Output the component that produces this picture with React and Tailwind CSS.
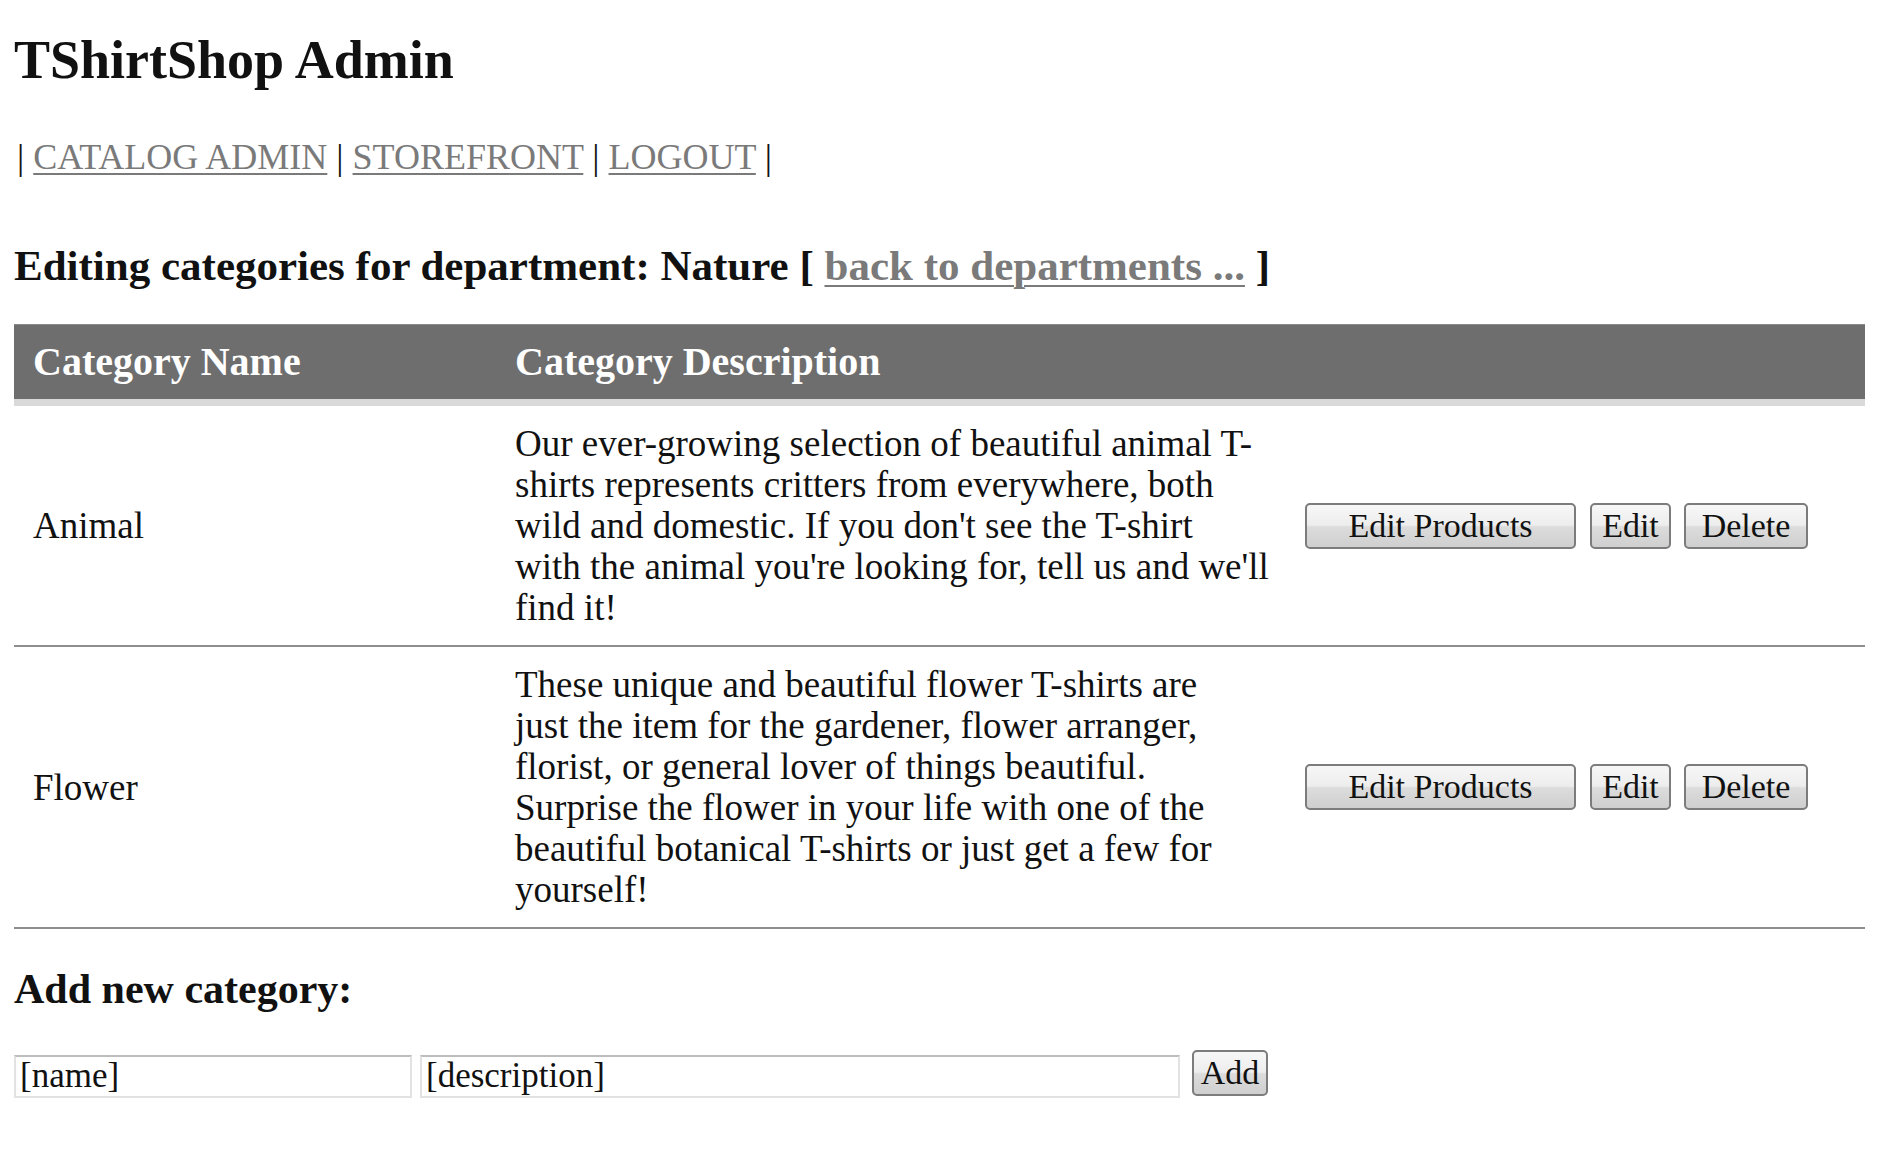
import React from "react";

const rows = [
  {
    name: "Animal",
    lines: [
      "Our ever-growing selection of beautiful animal T-",
      "shirts represents critters from everywhere, both",
      "wild and domestic. If you don't see the T-shirt",
      "with the animal you're looking for, tell us and we'll",
      "find it!",
    ],
  },
  {
    name: "Flower",
    lines: [
      "These unique and beautiful flower T-shirts are",
      "just the item for the gardener, flower arranger,",
      "florist, or general lover of things beautiful.",
      "Surprise the flower in your life with one of the",
      "beautiful botanical T-shirts or just get a few for",
      "yourself!",
    ],
  },
];

function Btn({ children, className = "" }) {
  return (
    <button
      className={
        "h-[46px] rounded-[5px] border-2 border-[#7c7c7c] bg-[linear-gradient(to_bottom,#f7f7f7_0%,#ededed_48%,#dcdcdc_52%,#cfcfcf_100%)] text-[34px] leading-[42px] text-[#111] " +
        className
      }
    >
      {children}
    </button>
  );
}

export default function App() {
  return (
    <div className="min-h-[1160px] w-[1888px] bg-white pl-[14px] pt-[30px] font-['Liberation_Serif',serif] text-[#111]">
      <h1 className="text-[54px] font-bold leading-[60px]">TShirtShop Admin</h1>

      <div className="mt-[47px] pl-[3px] text-[36px] leading-[40px] whitespace-pre">
        {"| "}
        <a href="#" className="text-[#7a7a7a] underline decoration-[2px] underline-offset-[4px]">CATALOG ADMIN</a>
        {" | "}
        <a href="#" className="text-[#7a7a7a] underline decoration-[2px] underline-offset-[4px]">STOREFRONT</a>
        {" | "}
        <a href="#" className="text-[#7a7a7a] underline decoration-[2px] underline-offset-[4px]">LOGOUT</a>
        {" |"}
      </div>

      <h2 className="mt-[65px] text-[43px] font-bold leading-[48px] whitespace-pre">
        {"Editing categories for department: Nature [ "}
        <a href="#" className="text-[#7a7a7a] underline decoration-[2px] underline-offset-[5px]">back to departments ...</a>
        {" ]"}
      </h2>

      <div className="mt-[34px] w-[1851px]">
        <div className="grid h-[75px] grid-cols-[487px_790px_1fr] items-center border-t border-[#8a8a8a] bg-[#6e6e6e] text-[40px] font-bold leading-[74px] text-white">
          <div className="pl-[19px]">Category Name</div>
          <div className="pl-[14px]">Category Description</div>
          <div />
        </div>
        <div className="h-[7px] bg-[#d9d9d9]" />

        {rows.map((r) => (
          <div
            key={r.name}
            className="grid grid-cols-[487px_790px_1fr] items-center border-b-2 border-[#8e8e8e] py-[17px] text-[37px] leading-[41px]"
          >
            <div className="pl-[19px]">{r.name}</div>
            <div className="pl-[14px] whitespace-nowrap">
              {r.lines.map((l, i) => (
                <div key={i}>{l}</div>
              ))}
            </div>
            <div className="flex items-center pl-[14px]">
              <Btn className="w-[271px]">Edit Products</Btn>
              <Btn className="ml-[14px] w-[81px]">Edit</Btn>
              <Btn className="ml-[13px] w-[124px]">Delete</Btn>
            </div>
          </div>
        ))}
      </div>

      <h3 className="mt-[36px] text-[42px] font-bold leading-[48px]">Add new category:</h3>

      <div className="mt-[37px] flex items-start">
        <input
          defaultValue="[name]"
          className="mt-[5px] h-[43px] w-[398px] border-2 border-[#e2e2e2] border-t-[#bdbdbd] bg-white px-[4px] font-['Liberation_Serif',serif] text-[35px] text-[#111] outline-none"
        />
        <input
          defaultValue="[description]"
          className="ml-[8px] mt-[5px] h-[43px] w-[760px] border-2 border-[#e2e2e2] border-t-[#bdbdbd] bg-white px-[4px] font-['Liberation_Serif',serif] text-[35px] text-[#111] outline-none"
        />
        <Btn className="ml-[12px] w-[76px]">Add</Btn>
      </div>
    </div>
  );
}
